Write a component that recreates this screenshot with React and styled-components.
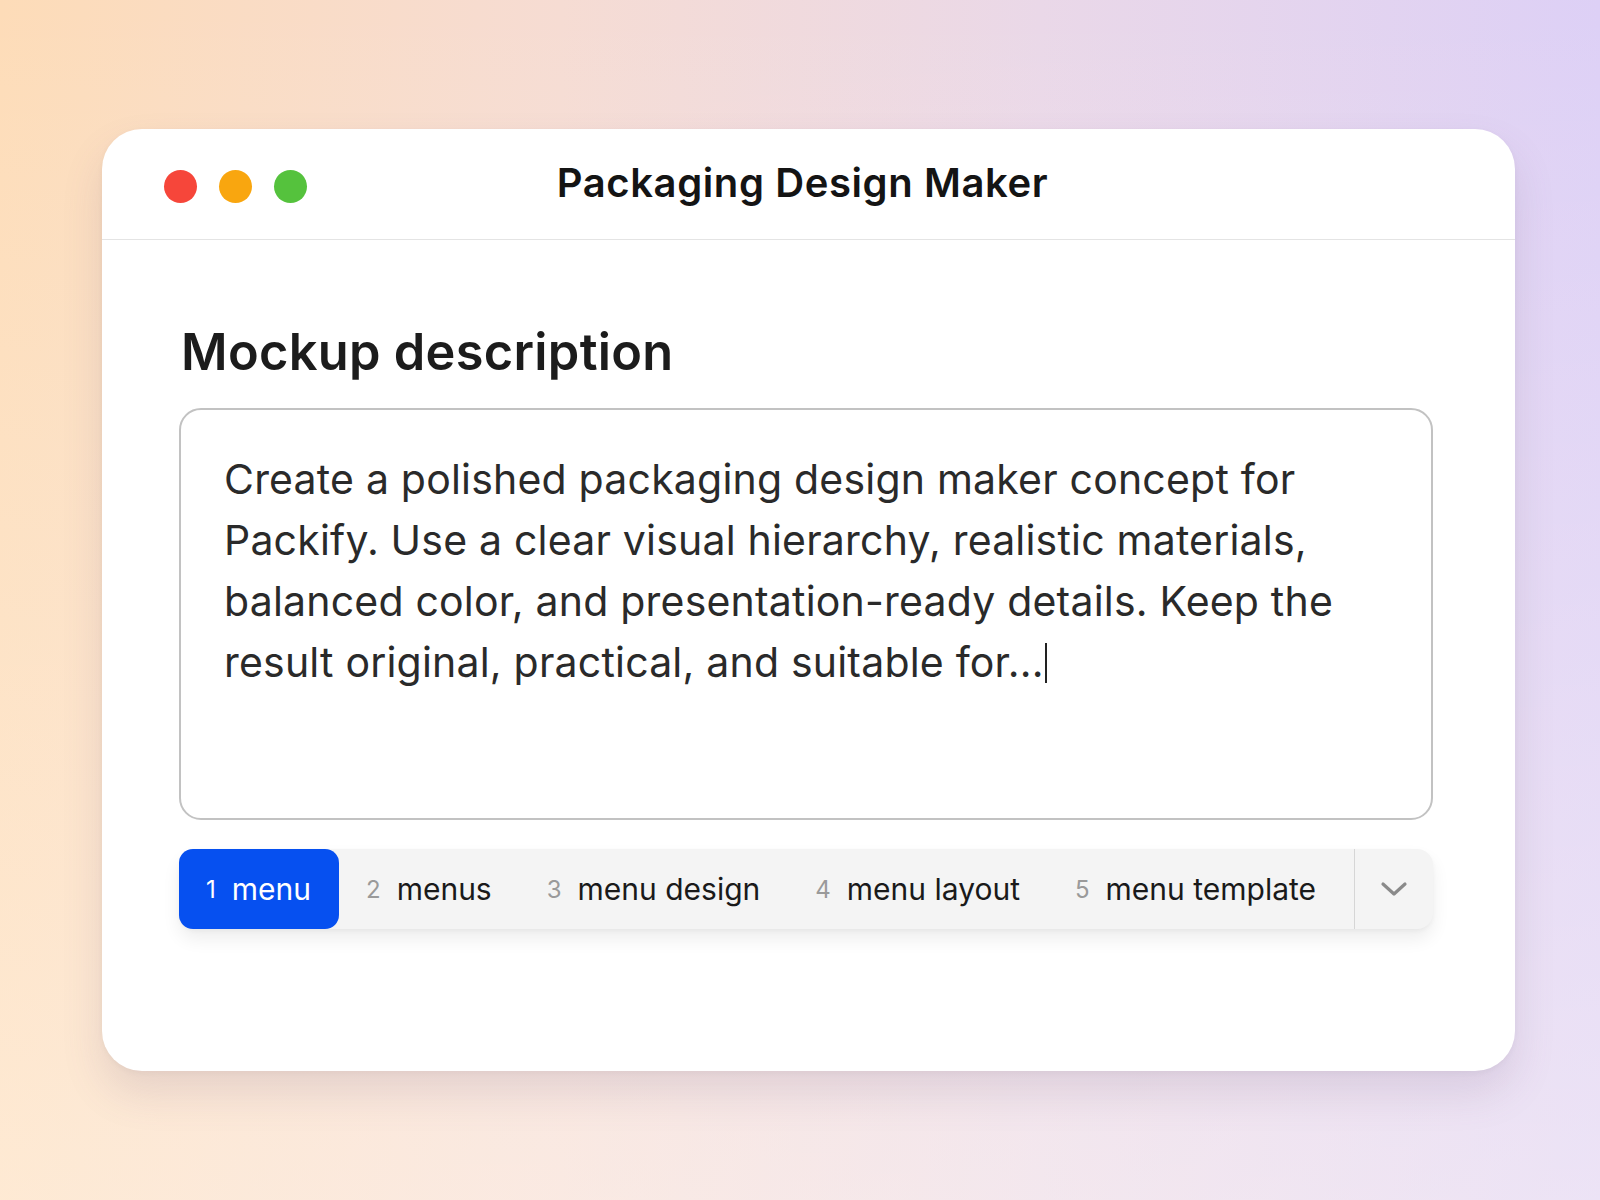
import React from "react";
import styled, { createGlobalStyle } from "styled-components";

const GlobalStyle = createGlobalStyle`
  html, body {
    margin: 0;
    padding: 0;
  }
  body {
    font-family: "Inter", "Liberation Sans", sans-serif;
    color: #1b1b1b;
  }
`;

const Page = styled.div`
  width: 1600px;
  height: 1200px;
  box-sizing: border-box;
  padding: 129px 0 0 102px;
  background:
    linear-gradient(180deg, rgba(255, 255, 255, 0) 0%, rgba(255, 250, 245, 0.45) 100%),
    linear-gradient(90deg, #fddcb8 0%, #f6dcd3 35%, #ead8e8 65%, #ddd0f6 100%);
  overflow: hidden;
`;

const Window = styled.div`
  width: 1413px;
  height: 942px;
  background: #ffffff;
  border-radius: 40px;
  box-shadow: 0 22px 40px rgba(120, 96, 130, 0.16), 0 2px 6px rgba(0, 0, 0, 0.04);
  display: flex;
  flex-direction: column;
  overflow: hidden;
`;

const TitleBar = styled.div`
  height: 110px;
  flex: none;
  display: grid;
  grid-template-columns: 1fr auto 1fr;
  align-items: center;
  padding: 0 62px;
  border-bottom: 1.5px solid #e4e4e4;
`;

const Lights = styled.div`
  display: flex;
  gap: 22px;
  margin-top: 4px;
`;

const Light = styled.span`
  width: 33px;
  height: 33px;
  border-radius: 50%;
  background: ${(p) => p.color};
`;

const Title = styled.h1`
  margin: 0 0 3px 0;
  font-size: 40px;
  font-weight: 600;
  letter-spacing: 0.6px;
  color: #141414;
  transform: translateX(-6px);
`;

const Content = styled.div`
  padding: 82px 82px 0 77px;
`;

const Heading = styled.h2`
  margin: 0 0 26px 2px;
  font-size: 50.5px;
  line-height: 60px;
  font-weight: 600;
  color: #1c1c1c;
  letter-spacing: 0.3px;
`;

const Prompt = styled.div`
  height: 412px;
  box-sizing: border-box;
  border: 2px solid #c2c2c2;
  border-radius: 22px;
  padding: 39px 30px 0 43px;
  font-size: 41px;
  line-height: 61px;
  letter-spacing: 0.2px;
  color: #2a2a2a;
  white-space: nowrap;
`;

const Caret = styled.span`
  display: inline-block;
  width: 2px;
  height: 40px;
  background: #222;
  vertical-align: -6px;
  margin-left: 1px;
`;

const TabBar = styled.div`
  margin-top: 29px;
  height: 80px;
  display: flex;
  align-items: stretch;
  background: #f4f4f4;
  border-radius: 16px;
  box-shadow: 0 10px 18px rgba(0, 0, 0, 0.07), 0 2px 4px rgba(0, 0, 0, 0.04);
`;

const Tabs = styled.div`
  flex: 1;
  display: flex;
  align-items: stretch;
`;

const Tab = styled.div`
  display: flex;
  align-items: center;
  gap: 16px;
  padding: 0 28px 0 27px;
  border-radius: 14px;
  background: ${(p) => (p.active ? "#0650f0" : "transparent")};
  color: ${(p) => (p.active ? "#ffffff" : "#1a1a1a")};
`;

const Num = styled.span`
  font-size: 24px;
  color: ${(p) => (p.active ? "#ffffff" : "#9a9a9a")};
`;

const Label = styled.span`
  font-size: 30px;
`;

const More = styled.div`
  width: 78px;
  flex: none;
  display: flex;
  align-items: center;
  justify-content: center;
  border-left: 1.5px solid #d6d6d6;
`;

const tabs = ["menu", "menus", "menu design", "menu layout", "menu template"];

export default function App() {
  return (
    <>
      <GlobalStyle />
      <Page>
        <Window>
          <TitleBar>
            <Lights>
              <Light color="#f6463a" />
              <Light color="#f9a60f" />
              <Light color="#55c23d" />
            </Lights>
            <Title>Packaging Design Maker</Title>
            <div />
          </TitleBar>
          <Content>
            <Heading>Mockup description</Heading>
            <Prompt>
              Create a polished packaging design maker concept for
              <br />
              Packify. Use a clear visual hierarchy, realistic materials,
              <br />
              balanced color, and presentation-ready details. Keep the
              <br />
              result original, practical, and suitable for...
              <Caret />
            </Prompt>
            <TabBar>
              <Tabs>
                {tabs.map((t, i) => (
                  <Tab key={t} active={i === 0}>
                    <Num active={i === 0}>{i + 1}</Num>
                    <Label>{t}</Label>
                  </Tab>
                ))}
              </Tabs>
              <More>
                <svg width="28" height="18" viewBox="0 0 28 18" fill="none">
                  <path
                    d="M3 4l11 10L25 4"
                    stroke="#8a8a8a"
                    strokeWidth="3.2"
                    strokeLinecap="round"
                    strokeLinejoin="round"
                  />
                </svg>
              </More>
            </TabBar>
          </Content>
        </Window>
      </Page>
    </>
  );
}
